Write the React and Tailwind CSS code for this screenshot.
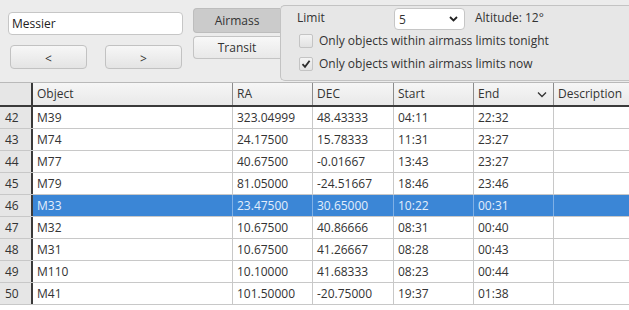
import React from "react";

const columns = [
  { key: "object", label: "Object", width: "w-[200px]" },
  { key: "ra", label: "RA", width: "w-[80px]" },
  { key: "dec", label: "DEC", width: "w-[81px]" },
  { key: "start", label: "Start", width: "w-[80px]" },
  { key: "end", label: "End", width: "w-[80px]" },
  { key: "description", label: "Description", width: "flex-1" },
];

const rows = [
  { id: 42, object: "M39", ra: "323.04999", dec: "48.43333", start: "04:11", end: "22:32" },
  { id: 43, object: "M74", ra: "24.17500", dec: "15.78333", start: "11:31", end: "23:27" },
  { id: 44, object: "M77", ra: "40.67500", dec: "-0.01667", start: "13:43", end: "23:27" },
  { id: 45, object: "M79", ra: "81.05000", dec: "-24.51667", start: "18:46", end: "23:46" },
  { id: 46, object: "M33", ra: "23.47500", dec: "30.65000", start: "10:22", end: "00:31" },
  { id: 47, object: "M32", ra: "10.67500", dec: "40.86666", start: "08:31", end: "00:40" },
  { id: 48, object: "M31", ra: "10.67500", dec: "41.26667", start: "08:28", end: "00:43" },
  { id: 49, object: "M110", ra: "10.10000", dec: "41.68333", start: "08:23", end: "00:44" },
  { id: 50, object: "M41", ra: "101.50000", dec: "-20.75000", start: "19:37", end: "01:38" },
];

const selectedId = 46;

const Checkbox = ({ checked }) => (
  <div className="flex h-[14px] w-[14px] items-center justify-center rounded-[2px] border border-[#c4c4c4] bg-gradient-to-b from-[#f4f4f4] to-[#e2e2e2]">
    {checked && (
      <svg width="10" height="10" viewBox="0 0 10 10">
        <path d="M1.5 5.2 L4 7.8 L8.6 1.8" fill="none" stroke="#2b2b2b" strokeWidth="1.8" />
      </svg>
    )}
  </div>
);

const Toolbar = () => {
  return (
    <div className="flex h-[83px] border-b border-[#b9b9b9] bg-[#ececec]">
      <div className="w-[193px] pl-2 pt-3">
        <div className="flex h-[23px] w-[175px] items-center rounded-[4px] border border-[#c6c6c6] bg-white pl-[3px] text-[#222]">
          Messier
        </div>
        <div className="mt-[10px] flex gap-[18px] pl-[2px]">
          <button className="flex h-[24px] w-[77px] items-center justify-center rounded-[4px] border border-[#c2c2c2] bg-gradient-to-b from-[#f7f7f7] to-[#e4e4e4] pt-[4px] text-[#333]">
            &lt;
          </button>
          <button className="flex h-[24px] w-[77px] items-center justify-center rounded-[4px] border border-[#c2c2c2] bg-gradient-to-b from-[#f7f7f7] to-[#e4e4e4] pt-[4px] text-[#333]">
            &gt;
          </button>
        </div>
      </div>
      <div className="flex w-[87px] flex-col gap-[3px] pt-[8px]">
        <button className="flex h-[25px] items-center justify-center rounded-l-[4px] border border-r-0 border-[#bdbdbd] bg-[#cbcbcb] text-[#333]">
          Airmass
        </button>
        <button className="flex h-[23px] items-center justify-center rounded-l-[4px] border border-r-0 border-[#c4c4c4] bg-gradient-to-b from-[#f8f8f8] to-[#e8e8e8] text-[#333]">
          Transit
        </button>
      </div>
      <div className="mb-[1px] mt-[5px] flex-1 rounded-l-[5px] border border-r-0 border-[#c3c3c3] bg-[#e7e7e7] pl-[16px] text-[#333]">
        <div className="flex h-[23px] items-center">
          <span className="w-[97px]">Limit</span>
          <div className="mt-[2px] flex h-[22px] w-[71px] items-center justify-between rounded-[4px] border border-[#c6c6c6] bg-white pl-[4px] pr-[6px] pt-[3px]">
            <span>5</span>
            <svg width="9" height="6" viewBox="0 0 9 6" className="-mt-[3px]">
              <path d="M1 1 L4.5 4.5 L8 1" fill="none" stroke="#222" strokeWidth="1.8" />
            </svg>
          </div>
          <span className="ml-[10px]">Altitude: 12°</span>
        </div>
        <div className="mt-[1px] flex h-[22px] items-center gap-[6px] pl-[2px]">
          <Checkbox checked={false} />
          <span>Only objects within airmass limits tonight</span>
        </div>
        <div className="mt-[1px] flex h-[22px] items-center gap-[6px] pl-[2px]">
          <Checkbox checked />
          <span>Only objects within airmass limits now</span>
        </div>
      </div>
    </div>
  );
};

const Table = () => {
  return (
    <div className="bg-white text-[#333]">
      <div className="flex h-[24px] border-b-2 border-[#3a3a3a] bg-gradient-to-b from-[#f6f6f6] to-[#e9e9e9]">
        <div className="w-[33px] border-r-2 border-[#3a3a3a] bg-[#e6e6e6]" />
        {columns.map((col, i) => (
          <div
            key={col.key}
            className={`${col.width} flex items-center justify-between pl-[4px] ${i < columns.length - 1 ? "border-r border-[#8c8c8c]" : ""}`}
          >
            <span>{col.label}</span>
            {col.key === "end" && (
              <svg width="10" height="7" viewBox="0 0 10 7" className="mr-[6px]">
                <path d="M1 1.5 L5 5.5 L9 1.5" fill="none" stroke="#333" strokeWidth="1.3" />
              </svg>
            )}
          </div>
        ))}
      </div>
      {rows.map((row) => {
        const selected = row.id === selectedId;
        return (
          <div key={row.id} className="flex h-[22px] border-b border-[#c8c8c8]">
            <div className="flex w-[33px] items-center border-r-2 border-[#3a3a3a] bg-[#e6e6e6] pl-[5px]">
              {row.id}
            </div>
            {columns.map((col, i) => (
              <div
                key={col.key}
                className={`${col.width} flex items-center pl-[4px] ${i < columns.length - 1 ? "border-r" : ""} ${
                  selected
                    ? "border-[#7fb0e6] bg-[#3b86d6] text-[#e3eefc]"
                    : "border-[#c8c8c8]"
                }`}
              >
                {row[col.key] || ""}
              </div>
            ))}
          </div>
        );
      })}
    </div>
  );
};

export default function App() {
  return (
    <div className="h-[310px] w-[629px] overflow-hidden bg-white font-['Open_Sans',sans-serif] text-[12px]">
      <Toolbar />
      <Table />
    </div>
  );
}
